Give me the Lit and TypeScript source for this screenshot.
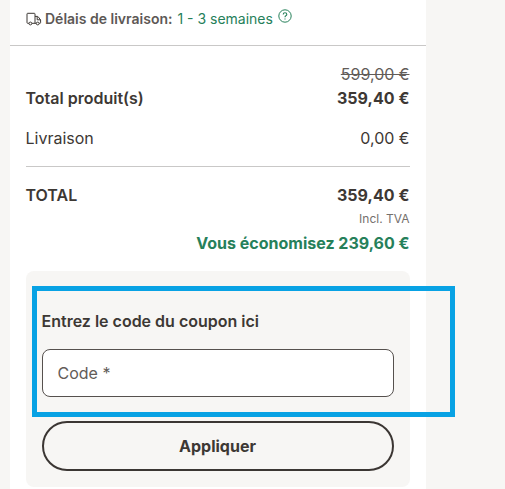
import { LitElement, html, css } from "lit";
import { customElement } from "lit/decorators.js";

@customElement("app-root")
export class AppRoot extends LitElement {
  static styles = css`
    :host {
      display: block;
      position: relative;
      box-sizing: border-box;
      height: 489px;
      padding: 0 79px 0 10px;
      overflow: hidden;
      background: #f7f6f4;
      color: #3d3834;
      font: 400 16px/24px Inter, "Liberation Sans", sans-serif;
    }
    * { box-sizing: border-box; }
    .card { height: 489px; background: #fff; }
    .delivery {
      display: flex;
      align-items: flex-start;
      height: 46px;
      padding: 7px 16px 0;
      border-bottom: 1px solid #c9c8c7;
      font-size: 14px;
      white-space: nowrap;
    }
    .truck { width: 16px; height: 16px; margin: 4px 3px 0 0; }
    .delivery-label { font-weight: 600; color: #5d5855; margin-right: 5px; }
    .green { color: #26805a; }
    .help { width: 14px; height: 14px; margin: 2px 0 0 5px; color: #26805a; }
    .summary { padding: 16px 16.5px 0 15.5px; }
    .row { display: flex; justify-content: space-between; align-items: flex-end; }
    .amounts { text-align: right; }
    .old { color: #625c58; text-decoration: line-through; }
    .strong { font-weight: 600; }
    .price { font-weight: 650; letter-spacing: 0.05px; }
    .shipping { margin-top: 16px; }
    .grand { position: relative; margin-top: 16px; padding-top: 16px; border-top: 1px solid #c9c8c7; }
    .tax { text-align: right; font-size: 12px; color: #75706d; line-height: 24px; }
    .saving { text-align: right; font-weight: 650; color: #26805a; }
    .coupon {
      display: flex;
      flex-direction: column;
      height: 216px;
      margin: 16px 16px 0;
      padding: 38px 16px 16px;
      border-radius: 8px;
      background: #f7f6f4;
    }
    .coupon-title { font-weight: 620; margin-left: -0.5px; }
    .field {
      height: 48px;
      margin: 16px 0 24px;
      padding: 0 14.5px;
      border: 1px solid #56514e;
      border-radius: 8px;
      background: #fff;
      color: #3d3834;
      font: inherit;
      outline: none;
    }
    .field::placeholder { color: #625c58; opacity: 1; }
    .apply {
      height: 50px;
      padding: 0 1px 0 0;
      border: 2px solid #3b3633;
      border-radius: 25px;
      background: transparent;
      color: #3d3834;
      font: inherit;
      font-weight: 650;
    }
    .highlight {
      position: absolute;
      left: 32px;
      top: 286px;
      width: 423px;
      height: 131px;
      border: 5px solid #08a2e4;
      pointer-events: none;
    }
  `;

  render() {
    return html`
      <section class="card">
        <div class="delivery">
          <svg class="truck" viewBox="0 0 16 16" fill="none" stroke="#3d3834" stroke-width="1" stroke-linejoin="round">
            <path d="M2.9 12.3H1.7Q1 12.3 1 11.6V3Q1 2.3 1.7 2.3H8.3Q9 2.3 9 3V12.3H5.9M9 5.4H11.4Q12 5.4 12.3 5.9L14.6 9V11.6Q14.6 12.3 14 12.3H13.2M10.2 12.3H9M11.2 5.6V8.8H14.4" />
            <circle cx="4.4" cy="12.5" r="1.4" />
            <circle cx="11.7" cy="12.5" r="1.4" />
          </svg>
          <span class="delivery-label">Délais de livraison:</span>
          <span class="green">1 - 3 semaines</span>
          <svg class="help" viewBox="0 0 14 14" fill="none" stroke="currentColor" stroke-width="1">
            <circle cx="7" cy="7" r="6.2" />
            <path d="M5.2 5.5Q5.2 3.8 7 3.8T8.8 5.4Q8.8 6.3 7.8 6.8Q7 7.2 7 8.3M7 9.4V10.5" stroke-width="1.1" />
          </svg>
        </div>
        <div class="summary">
          <div class="row">
            <span class="strong">Total produit(s)</span>
            <div class="amounts">
              <div class="old">599,00 €</div>
              <div class="price">359,40 €</div>
            </div>
          </div>
          <div class="row shipping"><span>Livraison</span><span>0,00 €</span></div>
          <div class="row grand"><span class="strong">TOTAL</span><span class="price">359,40 €</span></div>
          <div class="tax">Incl. TVA</div>
          <div class="saving">Vous économisez 239,60 €</div>
        </div>
        <div class="coupon">
          <span class="coupon-title">Entrez le code du coupon ici</span>
          <input class="field" placeholder="Code *" />
          <button class="apply">Appliquer</button>
        </div>
      </section>
      <div class="highlight"></div>
    `;
  }
}
